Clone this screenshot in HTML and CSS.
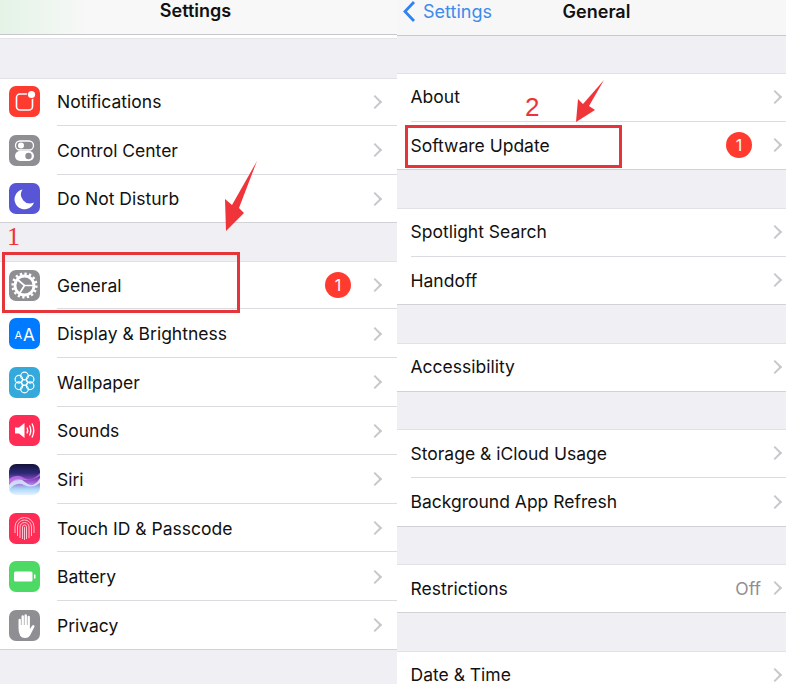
FILE: index.html
```html
<!DOCTYPE html>
<html lang="en">
<head>
<meta charset="utf-8">
<title>Settings and General</title>
<link rel="stylesheet" href="styles.css">
</head>
<body>
<main class="shot">
  <section class="pane pane-left">
    <header class="nav nav-left"><h1>Settings</h1></header>
    <div class="strip"></div>
    <div class="group first-left">
      <div class="row"><svg class="ico" viewBox="0 0 31 31"><rect width="31" height="31" rx="7" fill="#ff3b30"/><rect x="7.500" y="8" width="16" height="16" rx="3.500" fill="none" stroke="#fff" stroke-width="1.600"/><circle cx="22.500" cy="8.500" r="4.600" fill="#ff3b30"/><circle cx="22.500" cy="8.500" r="3.600" fill="#fff"/></svg><span class="label">Notifications</span><i class="chev"></i></div>
      <div class="row"><svg class="ico" viewBox="0 0 31 31"><rect width="31" height="31" rx="7" fill="#8e8e93"/><rect x="6.500" y="6" width="18" height="9" rx="4.500" fill="none" stroke="#fff" stroke-width="1.300"/><circle cx="12" cy="10.500" r="3" fill="#fff"/><rect x="6" y="16" width="19" height="10" rx="5" fill="#fff"/><circle cx="19.500" cy="21" r="3.200" fill="#8e8e93"/></svg><span class="label">Control Center</span><i class="chev"></i></div>
      <div class="row"><svg class="ico" viewBox="0 0 31 31"><rect width="31" height="31" rx="7" fill="#5856d6"/><path d="M13.500 6.500A10 10 0 1 0 25 19.500A9 9 0 0 1 13.500 6.500Z" fill="#fff"/></svg><span class="label">Do Not Disturb</span><i class="chev"></i></div>
    </div>
    <div class="gap gap-left"></div>
    <div class="group">
      <div class="row"><svg class="ico" viewBox="0 0 31 31"><rect width="31" height="31" rx="7" fill="#8e8e93"/><circle cx="15.500" cy="15.500" r="9.500" fill="none" stroke="#fff" stroke-width="2.800"/><circle cx="15.500" cy="15.500" r="11.800" fill="none" stroke="#fff" stroke-width="2.600" stroke-dasharray="2.300 2.300"/><path d="M15.500 15.500 L9 10M15.500 15.500 L24 15.500M15.500 15.500 L10.500 23.500" stroke="#fff" stroke-width="1.700"/></svg><span class="label">General</span><b class="badge">1</b><i class="chev"></i></div>
      <div class="row"><svg class="ico" viewBox="0 0 31 31"><rect width="31" height="31" rx="7" fill="#007aff"/><text x="5.500" y="21" class="aa-small">A</text><text x="14" y="22.500" class="aa-big">A</text></svg><span class="label">Display &amp; Brightness</span><i class="chev"></i></div>
      <div class="row"><svg class="ico" viewBox="0 0 31 31"><rect width="31" height="31" rx="7" fill="#34aadc"/><g fill="none" stroke="#fff" stroke-width="1.200"><circle cx="15.500" cy="15.500" r="3"/><circle cx="15.500" cy="9" r="3.800"/><circle cx="15.500" cy="22" r="3.800"/><circle cx="9.900" cy="12.250" r="3.800"/><circle cx="21.100" cy="12.250" r="3.800"/><circle cx="9.900" cy="18.750" r="3.800"/><circle cx="21.100" cy="18.750" r="3.800"/></g></svg><span class="label">Wallpaper</span><i class="chev"></i></div>
      <div class="row"><svg class="ico" viewBox="0 0 31 31"><rect width="31" height="31" rx="7" fill="#ff2d55"/><path d="M6 12.500H10L15.500 8V23L10 18.500H6Z" fill="#fff"/><path d="M18 12.500Q19.500 15.500 18 18.500M20.500 10.500Q23 15.500 20.500 20.500M23 8.500Q26.500 15.500 23 22.500" fill="none" stroke="#fff" stroke-width="1.300"/></svg><span class="label">Sounds</span><i class="chev"></i></div>
      <div class="row"><svg class="ico" viewBox="0 0 31 31"><defs><linearGradient id="siri" x1="0" y1="0" x2="0" y2="1"><stop offset="0" stop-color="#14123a"/><stop offset=".3" stop-color="#2c2a78"/><stop offset=".55" stop-color="#a04fd0"/><stop offset=".8" stop-color="#a8d8f8"/><stop offset="1" stop-color="#e8f2ff"/></linearGradient></defs><rect width="31" height="31" rx="7" fill="url(#siri)"/><path d="M0 21Q8 10 16 18T31 14V19Q23 25 15 21T0 26Z" fill="#d6eefc" opacity=".85"/><path d="M0 15Q8 9 15 14T31 9V12Q22 17 15 16T0 19Z" fill="#c77cf0" opacity=".75"/></svg><span class="label">Siri</span><i class="chev"></i></div>
      <div class="row"><svg class="ico" viewBox="0 0 31 31"><rect width="31" height="31" rx="7" fill="#ff2d55"/><g fill="none" stroke="#ffc3cf" stroke-width="1"><path d="M6 20V14A9.500 9.500 0 0 1 25 14V20"/><path d="M8.500 23V14A7 7 0 0 1 22.500 14V23"/><path d="M11 25V14A4.500 4.500 0 0 1 20 14V25"/><path d="M13.500 26V14A2 2 0 0 1 17.500 14V26"/><path d="M15.500 14V27"/></g></svg><span class="label">Touch ID &amp; Passcode</span><i class="chev"></i></div>
      <div class="row"><svg class="ico" viewBox="0 0 31 31"><rect width="31" height="31" rx="7" fill="#4cd964"/><rect x="5" y="10.500" width="18.500" height="10" rx="1.500" fill="#fff"/><rect x="25" y="13.500" width="1.500" height="4" fill="#fff"/></svg><span class="label">Battery</span><i class="chev"></i></div>
      <div class="row"><svg class="ico" viewBox="0 0 31 31"><rect width="31" height="31" rx="7" fill="#8e8e93"/><path d="M9.500 18V10a1.200 1.200 0 0 1 2.400 0v5h.6V6.500a1.200 1.200 0 0 1 2.400 0V15h.6V5.500a1.200 1.200 0 0 1 2.400 0V15h.6V7a1.200 1.200 0 0 1 2.400 0v12l2.400-3.500a1.300 1.300 0 0 1 2.200 1.300L21 25.500Q19.500 28 16 28 9.500 28 9.500 18Z" fill="#fff"/></svg><span class="label">Privacy</span><i class="chev"></i></div>
    </div>
    <div class="tail-left"></div>
    <div class="foot-left"></div>
  </section>

  <section class="pane pane-right">
    <header class="nav nav-right">
      <span class="back"><svg class="back-ico" viewBox="0 0 14 23"><path d="M12 2 L3 11.500 L12 21" fill="none" stroke="#2f84ee" stroke-width="2.800"/></svg>Settings</span>
      <h1>General</h1>
    </header>
    <div class="group first-right">
      <div class="row"><span class="label">About</span><i class="chev"></i></div>
      <div class="row"><span class="label">Software Update</span><b class="badge">1</b><i class="chev"></i></div>
    </div>
    <div class="gap"></div>
    <div class="group">
      <div class="row"><span class="label">Spotlight Search</span><i class="chev"></i></div>
      <div class="row"><span class="label">Handoff</span><i class="chev"></i></div>
    </div>
    <div class="gap"></div>
    <div class="group">
      <div class="row"><span class="label">Accessibility</span><i class="chev"></i></div>
    </div>
    <div class="gap"></div>
    <div class="group">
      <div class="row"><span class="label">Storage &amp; iCloud Usage</span><i class="chev"></i></div>
      <div class="row"><span class="label">Background App Refresh</span><i class="chev"></i></div>
    </div>
    <div class="gap"></div>
    <div class="group">
      <div class="row"><span class="label">Restrictions</span><span class="value">Off</span><i class="chev"></i></div>
    </div>
    <div class="gap"></div>
    <div class="group">
      <div class="row"><span class="label">Date &amp; Time</span><i class="chev"></i></div>
    </div>
  </section>

  <div class="box box-one"></div>
  <div class="box box-two"></div>
  <span class="num num-one">1</span>
  <span class="num num-two">2</span>
  <svg class="arrow arrow-one" viewBox="0 0 36 70"><path d="M34 0 L16 47 L21 52 L3 70 L2 38 L9 44 Z" fill="#f0353a"/></svg>
  <svg class="arrow arrow-two" viewBox="0 0 31 42"><path d="M29 0 L14 26 L20 30 L1 42 L3 19 L8 24 Z" fill="#f0353a"/></svg>
</main>
</body>
</html>
```
FILE: styles.css
```css
* { box-sizing: border-box; }
html, body { margin: 0; padding: 0; background: #efeff4; }
.shot {
  position: relative;
  display: flex;
  width: 786px;
  height: 688px;
  overflow: hidden;
  font-family: Inter, "Liberation Sans", sans-serif;
  color: #111;
}
.pane { display: flex; flex-direction: column; height: 688px; overflow: hidden; background: #efeff4; }
.pane-left { width: 397px; }
.pane-right { width: 389px; }
.nav { flex: none; display: flex; align-items: center; justify-content: center; position: relative; border-bottom: 1px solid #c8c8cc; }
.nav h1 { margin: 0; font-size: 18px; font-weight: 600; }
.nav-left { height: 35px; padding-bottom: 13px; padding-right: 6px; background: linear-gradient(90deg, #e4f3e6 0, #f7f8f7 22%, #f8f8f8 100%); }
.nav-right { height: 36px; padding-bottom: 12px; padding-left: 10px; background: #f7f7f8; }
.strip { flex: none; height: 4px; background: #fff; border-bottom: 1px solid #e4e4e8; }
.first-left { margin-top: 38.500px; }
.first-right { margin-top: 37px; }
.gap { flex: none; height: 37.800px; }
.gap-left { height: 37.500px; }
.group { flex: none; background: #fff; box-shadow: inset 0 1px 0 #e2e2e6, inset 0 -1px 0 #d2d2d6; }
.row { position: relative; display: flex; align-items: center; height: 48.600px; padding: 0 3px 1px 13.500px; }
.pane-left .row { padding: 0 14px 0 9px; }
.row::after { content: ""; position: absolute; left: 13.500px; right: 0; bottom: 0; height: 1px; background: #dcdce0; }
.pane-left .row::after { left: 57px; }
.row:last-child::after { display: none; }
.ico { flex: none; width: 31px; height: 31px; margin-right: 17px; }
.label { flex: 1; font-size: 17.500px; white-space: nowrap; }
.value { font-size: 17.500px; color: #8e8e93; margin-right: 9px; }
.badge { flex: none; display: flex; align-items: center; justify-content: center; width: 26px; height: 26px; margin-right: 18px; border-radius: 50%; background: #ff3b30; color: #fff; font-size: 16px; font-weight: 400; }
.pane-left .badge { margin-right: 19px; }
.chev { flex: none; width: 10px; height: 10px; margin-right: 3px; border-top: 2px solid #c7c7cc; border-right: 2px solid #c7c7cc; transform: rotate(45deg); }
.tail-left { flex: 1; }
.foot-left { flex: none; height: 4px; background: #fff; }
.back { position: absolute; left: 5px; top: 0; display: flex; align-items: center; gap: 7px; font-size: 18px; color: #3d8bec; }
.back-ico { width: 14px; height: 23px; }
.aa-small { font: 400 11px Inter, sans-serif; fill: #fff; }
.aa-big { font: 400 17px Inter, sans-serif; fill: #fff; }
.box { position: absolute; border: 3px solid #e5343a; }
.box-one { left: 2px; top: 252px; width: 238px; height: 61px; }
.box-two { left: 405px; top: 125px; width: 217px; height: 43px; }
.num { position: absolute; color: #ee3338; font-family: "Liberation Serif", serif; font-size: 26px; line-height: 26px; }
.num-one { left: 7px; top: 224px; }
.num-two { left: 525px; top: 94px; font-family: "Liberation Sans", sans-serif; }
.arrow { position: absolute; }
.arrow-one { left: 223px; top: 161px; width: 36px; height: 70px; }
.arrow-two { left: 575px; top: 80px; width: 31px; height: 42px; }
```
